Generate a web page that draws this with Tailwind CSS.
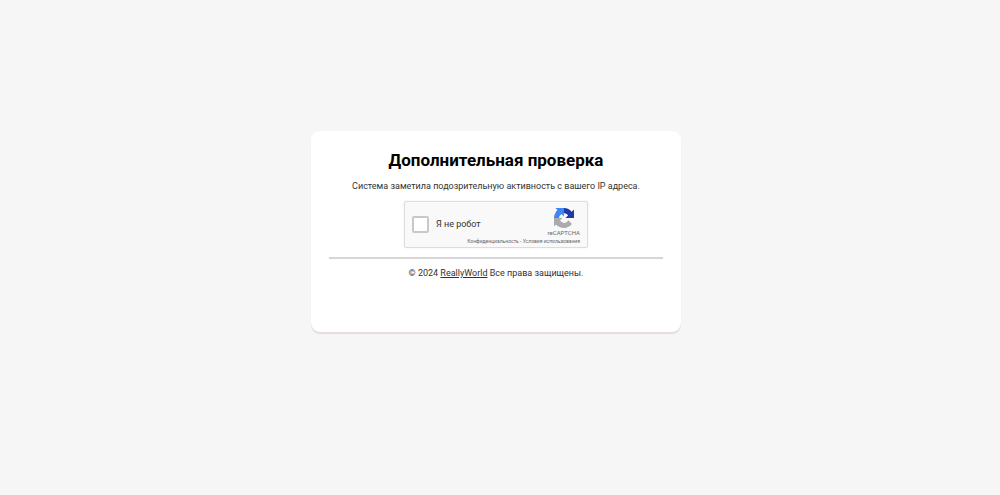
<!DOCTYPE html>
<html lang="ru">
<head>
  <meta charset="UTF-8" />
  <meta name="viewport" content="width=device-width, initial-scale=1.0" />
  <title>Дополнительная проверка</title>
  <script src="https://cdn.jsdelivr.net/npm/@tailwindcss/browser@4"></script>
</head>
<body class="bg-[#f6f6f6] min-h-screen flex items-center justify-center pr-2 pb-8 font-[Roboto,sans-serif] text-[#333]">
  <main class="w-full max-w-[370px] min-h-[201px] bg-white rounded-[9px] shadow-[0_2px_1px_#e6dcdc] px-[18px] pt-[17px] pb-12 text-center">
    <h1 class="text-[17px] leading-[24px] font-bold text-black">Дополнительная проверка</h1>
    <p class="mt-[6px] text-[9px] leading-[16px]">Система заметила подозрительную активность с вашего IP адреса.</p>
    <div class="mx-auto mt-[7px] w-[184px] h-[47px] flex justify-between bg-[#f9f9f9] border border-[#dcdcdc] rounded-[2px] shadow-[0_0_2px_#00000014] relative">
      <label class="flex items-center gap-[7px] pl-[7px] pb-px text-[9px] leading-[12px]">
        <input type="checkbox" class="appearance-none size-[17px] bg-white border-2 border-[#c8c8c8] rounded-[2px]" />
        Я не робот
      </label>
      <div class="flex flex-col items-center pt-[6px] pr-[7px] text-[#666]">
        <svg class="size-[20px]" viewBox="0 0 64 64" xmlns="http://www.w3.org/2000/svg">
          <path fill="#1c3aa9" d="M64 31.955l-.033-1.37V4.687l-7.16 7.16C50.948 4.674 42.033.093 32.05.093c-10.4 0-19.622 4.96-25.458 12.64l11.736 11.86a15.55 15.55 0 0 1 4.754-5.334c2.05-1.6 4.952-2.906 8.968-2.906.485 0 .86.057 1.135.163 4.976.393 9.288 3.14 11.828 7.124l-8.307 8.307L64 31.953" />
          <path fill="#4285f4" d="M31.862.094l-1.37.033H4.594l7.16 7.16C4.58 13.147 0 22.06 0 32.046c0 10.4 4.96 19.622 12.64 25.458L24.5 45.768a15.55 15.55 0 0 1-5.334-4.754c-1.6-2.05-2.906-4.952-2.906-8.968 0-.485.057-.86.163-1.135.393-4.976 3.14-9.288 7.124-11.828l8.307 8.307L31.86.095" />
          <path fill="#ababab" d="M.001 32.045l.033 1.37v25.898l7.16-7.16c5.86 7.173 14.774 11.754 24.76 11.754 10.4 0 19.622-4.96 25.458-12.64l-11.736-11.86a15.55 15.55 0 0 1-4.754 5.334c-2.05 1.6-4.952 2.906-8.968 2.906-.485 0-.86-.057-1.135-.163-4.976-.393-9.288-3.14-11.828-7.124l8.307-8.307c-10.522.04-22.4.066-27.295-.005" />
        </svg>
        <span class="mt-px text-[6px] leading-[8px]">reCAPTCHA</span>
      </div>
      <div class="absolute right-[7px] bottom-[2px] text-[5px] leading-[8px] text-[#666] whitespace-nowrap">
        <a href="#">Конфиденциальность</a> - <a href="#">Условия использования</a>
      </div>
    </div>
    <hr class="mt-[9px] border-t-2 border-[#d6d6d6]" />
    <footer class="mt-[6px] text-[9px] leading-[16px]">
      © 2024 <a href="#" class="underline">ReallyWorld</a> Все права защищены.
    </footer>
  </main>
</body>
</html>
